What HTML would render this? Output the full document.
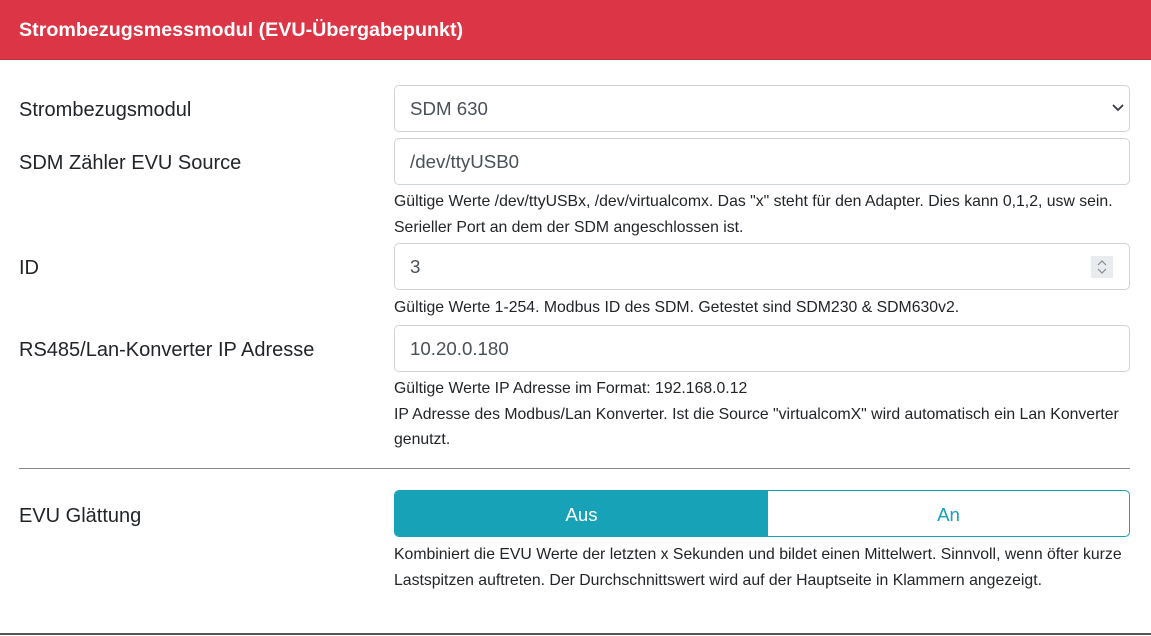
<!DOCTYPE html><html><head><style>
body{margin:0;width:1151px;height:636px;background:#fff;font-family:"Liberation Sans",sans-serif;color:#212529;position:relative;overflow:hidden}
.hd{position:absolute;left:0;top:0;width:1151px;height:60px;background:#dc3545;border-bottom:1px solid #c9303f;box-sizing:border-box}
.hd span{position:absolute;left:19px;top:19px;color:#fff;font-weight:bold;font-size:19.7px}
.lb{position:absolute;left:19px;font-size:20px}
.in{position:absolute;left:394px;width:736px;height:47px;border:1px solid #ced4da;border-radius:5px;box-sizing:border-box;font-size:18.7px;color:#495057;padding:12px 0 0 15px}
.h{position:absolute;left:394px;font-size:15.8px;line-height:25.5px;color:#212529}
.hr{position:absolute;left:19px;width:1111px;top:468px;height:1px;background:#888}
.bot{position:absolute;left:0;width:1151px;top:633px;height:2px;background:#555}
</style></head><body>
<div class="hd"><span>Strombezugsmessmodul (EVU-Übergabepunkt)</span></div>
<div class="lb" style="top:99px">Strombezugsmodul</div>
<div class="in" style="top:85px">SDM 630<svg style="position:absolute;right:4px;top:17px" width="14" height="10"><path d="M2 2l5 5 5-5" fill="none" stroke="#343a40" stroke-width="1.8"/></svg></div>
<div class="lb" style="top:152px">SDM Zähler EVU Source</div>
<div class="in" style="top:138px">/dev/ttyUSB0</div>
<div class="h" style="top:189px">Gültige Werte /dev/ttyUSBx, /dev/virtualcomx. Das "x" steht für den Adapter. Dies kann 0,1,2, usw sein.<br>Serieller Port an dem der SDM angeschlossen ist.</div>
<div class="lb" style="top:257px">ID</div>
<div class="in" style="top:243px">3<div style="position:absolute;right:16px;top:12px;width:22px;height:22px;background:#e9ecef"><svg width="22" height="22"><path d="M7 9l4-4 4 4M7 13l4 4 4-4" fill="none" stroke="#888" stroke-width="1.2"/></svg></div></div>
<div class="h" style="top:295px">Gültige Werte 1-254. Modbus ID des SDM. Getestet sind SDM230 &amp; SDM630v2.</div>
<div class="lb" style="top:339px">RS485/Lan-Konverter IP Adresse</div>
<div class="in" style="top:325px">10.20.0.180</div>
<div class="h" style="top:376px">Gültige Werte IP Adresse im Format: 192.168.0.12<br>IP Adresse des Modbus/Lan Konverter. Ist die Source "virtualcomX" wird automatisch ein Lan Konverter<br>genutzt.</div>
<div class="hr"></div>
<div class="lb" style="top:505px">EVU Glättung</div>
<div style="position:absolute;left:394px;top:490px;width:736px;height:47px;border:1px solid #17a2b8;border-radius:5px;box-sizing:border-box;overflow:hidden;display:flex;font-size:18.7px">
<div style="width:373px;background:#17a2b8;color:#fff;text-align:center;line-height:47px">Aus</div>
<div style="flex:1;color:#17a2b8;text-align:center;line-height:47px">An</div></div>
<div class="h" style="top:542px">Kombiniert die EVU Werte der letzten x Sekunden und bildet einen Mittelwert. Sinnvoll, wenn öfter kurze<br>Lastspitzen auftreten. Der Durchschnittswert wird auf der Hauptseite in Klammern angezeigt.</div>
<div class="bot"></div>
</body></html>
